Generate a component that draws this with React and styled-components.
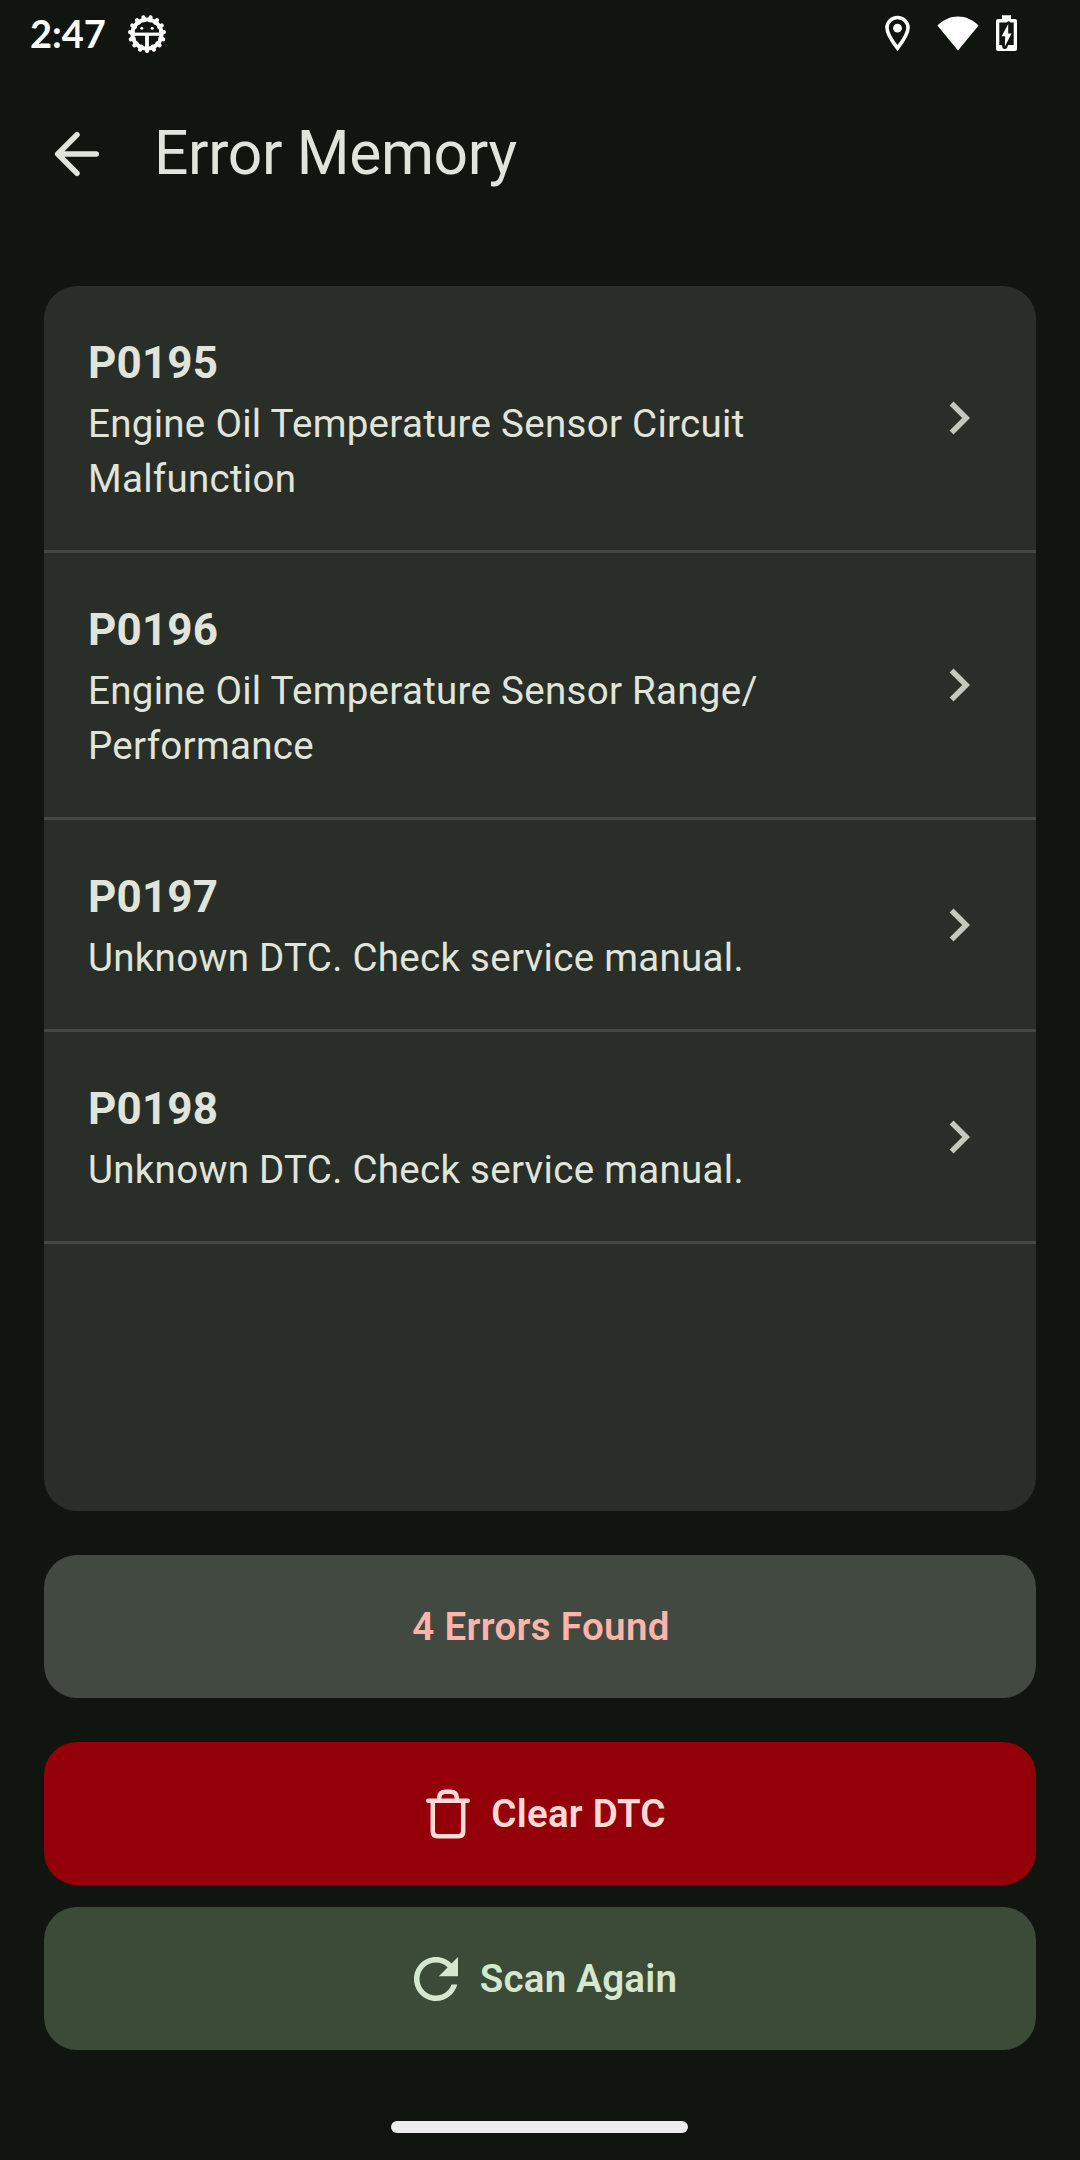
import React from "react";
import styled, { createGlobalStyle } from "styled-components";

const GlobalStyle = createGlobalStyle`
  * { box-sizing: border-box; }
  html, body { margin: 0; padding: 0; background: #10150f; }
  body { font-family: Roboto, "Noto Sans", sans-serif; color: #e0e4db; }
`;

const Screen = styled.div`
  width: 1080px;
  height: 2160px;
  display: flex;
  flex-direction: column;
  overflow: hidden;
  background: #10150f;
`;

const StatusBar = styled.header`
  height: 66px;
  flex: none;
  display: flex;
  align-items: center;
  justify-content: space-between;
  padding: 0 63px 0 30px;
  color: #fff;
`;

const StatusGroup = styled.div`
  display: flex;
  align-items: center;
  gap: ${(p) => p.$gap}px;
`;

const Clock = styled.span`
  font-family: Lato, sans-serif;
  font-weight: 700;
  font-size: 38px;
  line-height: 44px;
  white-space: nowrap;
`;

const Icon = styled.svg`
  display: block;
  flex: none;
  width: ${(p) => p.$w || 66}px;
  height: ${(p) => p.$h || p.$w || 66}px;
`;

const AppBar = styled.div`
  height: 176px;
  flex: none;
  display: flex;
  align-items: center;
  padding-left: 11px;
  gap: 11px;
`;

const IconButton = styled.button`
  width: 132px;
  height: 132px;
  padding: 0;
  border: 0;
  background: none;
  color: inherit;
  display: flex;
  align-items: center;
  justify-content: center;
`;

const Title = styled.h1`
  margin: 0;
  padding-bottom: 2px;
  font-size: 60.5px;
  line-height: 77px;
  font-weight: 400;
  letter-spacing: -0.35px;
`;

const Content = styled.main`
  flex: 1;
  min-height: 0;
  display: flex;
  flex-direction: column;
  gap: 44px;
  padding: 44px 44px 0;
`;

const ErrorList = styled.ul`
  height: 1225px;
  flex: none;
  margin: 0;
  padding: 0;
  list-style: none;
  border-radius: 33px;
  overflow: hidden;
  background: #292e28;
`;

const ErrorRow = styled.li`
  display: flex;
  align-items: center;
  justify-content: space-between;
  padding: 44px;
  border-bottom: 3px solid #424940;
`;

const Details = styled.div`
  width: 720px;
`;

const Code = styled.div`
  font-size: 44px;
  line-height: 66px;
  font-weight: 700;
  letter-spacing: 0.15px;
`;

const Description = styled.div`
  font-size: 38.5px;
  line-height: 55px;
  letter-spacing: 0.29px;
`;

const Summary = styled.div`
  height: 143px;
  flex: none;
  display: flex;
  align-items: center;
  justify-content: center;
  padding-left: 2px;
  border-radius: 33px;
  background: #424940;
  color: #ffb4ab;
  font-size: 38.5px;
  font-weight: 600;
  letter-spacing: 0.36px;
`;

const Actions = styled.div`
  display: flex;
  flex-direction: column;
  gap: 22px;
`;

const ActionButton = styled.button`
  height: 143px;
  padding: 0;
  border: 0;
  border-radius: 33px;
  display: flex;
  align-items: center;
  justify-content: center;
  gap: 11px;
  font-family: inherit;
  font-size: 38.5px;
  font-weight: 600;
  letter-spacing: 0.22px;
  background: ${(p) => p.$bg};
  color: ${(p) => p.$fg};
`;

const NavigationArea = styled.footer`
  height: 66px;
  flex: none;
  display: flex;
  justify-content: center;
  padding: 27px 1px 0 0;
`;

const HomeIndicator = styled.div`
  width: 297px;
  height: 12px;
  border-radius: 6px;
  background: #ececec;
`;

const TEETH = Array.from({ length: 15 }, (_, i) => i * 24 + 12);

const GearIcon = () => (
  <Icon $w={40} viewBox="-20 -21 40 40" fill="none" stroke="currentColor">
    <circle r="14.6" strokeWidth="4" />
    {TEETH.map((angle) => (
      <path key={angle} d="M0 -14V-17" strokeWidth="4.2" strokeLinecap="round" transform={`rotate(${angle})`} />
    ))}
    <path d="M-14 .2H14" strokeWidth="3.2" />
    <path d="M0 0V14" strokeWidth="3.8" />
    <circle cx="-5.2" cy="-5.7" r="1.5" fill="currentColor" stroke="none" />
    <circle cx="5.2" cy="-5.7" r="1.5" fill="currentColor" stroke="none" />
  </Icon>
);

const PinIcon = () => (
  <Icon $w={25} $h={36} viewBox="0 -.5 25 36">
    <path
      d="M12.5 2C6.6 2 2 6.6 2 12.5c0 6.200 5.200 13.300 10.500 20.200C17.800 25.800 23 18.700 23 12.500 23 6.600 18.400 2 12.500 2z"
      fill="none"
      stroke="currentColor"
      strokeWidth="3.600"
    />
    <circle cx="12.500" cy="12.700" r="4.400" fill="currentColor" />
  </Icon>
);

const WifiIcon = () => (
  <Icon $w={42} $h={35} viewBox="0 0 42 35">
    <path d="M21 34.500L.4 9.600C6.200 4 13.200 .6 21 .6s14.800 3.400 20.600 9z" fill="currentColor" />
  </Icon>
);

const BatteryIcon = () => (
  <Icon $w={21} $h={36} viewBox="0 0 21 36">
    <path
      fillRule="evenodd"
      d="M6 .3h9V4h4q2 0 2 2v28q0 2-2 2H2q-2 0-2-2V6q0-2 2-2h4zM3.300 7.500v22.500h2.400l1 3.300q2 1.200 4.200 0l1.200-3.300h5.600V7.500h-3.200l-1.600-1.400-2.600 1.400z"
      fill="currentColor"
    />
    <path d="M12.200 9L5.600 21.200h3.600L8.800 31.500 15.600 18.500h-3.400z" fill="currentColor" />
  </Icon>
);

const BackIcon = () => (
  <Icon viewBox="0 0 24 24" fill="none" stroke="currentColor" strokeWidth="2" strokeLinecap="round" strokeLinejoin="round">
    <path d="M19 12H5M12 5l-7 7 7 7" />
  </Icon>
);

const ChevronIcon = () => (
  <Icon viewBox="0 0 24 24">
    <path d="M10 6L8.590 7.410 13.170 12l-4.580 4.590L10 18l6-6z" fill="#c2c9bd" />
  </Icon>
);

const TrashIcon = () => (
  <Icon viewBox="-1 0 66 66" fill="none" stroke="currentColor" strokeWidth="4.500" strokeLinecap="round" strokeLinejoin="round">
    <path d="M13.200 19.700H52.800M17.800 19.700V50.500Q17.800 55.200 22.500 55.200H43.500Q48.200 55.200 48.200 50.500V19.700M24.200 19.500V17Q24.200 10.700 30.500 10.700H35.500Q41.800 10.700 41.800 17V19.500" />
  </Icon>
);

const RefreshIcon = () => (
  <Icon viewBox="0 0 24 24">
    <path
      d="M17.650 6.350C16.200 4.900 14.210 4 12 4c-4.420 0-7.990 3.580-7.990 8s3.570 8 7.990 8c3.730 0 6.840-2.550 7.730-6h-2.080c-.82 2.330-3.040 4-5.650 4-3.310 0-6-2.690-6-6s2.690-6 6-6c1.660 0 3.140.69 4.220 1.780L13 11h7V4l-2.350 2.350z"
      fill="currentColor"
    />
  </Icon>
);

const ERRORS = [
  { code: "P0195", text: "Engine Oil Temperature Sensor Circuit Malfunction" },
  { code: "P0196", text: "Engine Oil Temperature Sensor Range/\u200bPerformance" },
  { code: "P0197", text: "Unknown DTC. Check service manual." },
  { code: "P0198", text: "Unknown DTC. Check service manual." },
];

export default function App() {
  return (
    <Screen>
      <GlobalStyle />
      <StatusBar>
        <StatusGroup $gap={21}>
          <Clock>2:47</Clock>
          <GearIcon />
        </StatusGroup>
        <StatusGroup $gap={27}>
          <PinIcon />
          <StatusGroup $gap={17}>
            <WifiIcon />
            <BatteryIcon />
          </StatusGroup>
        </StatusGroup>
      </StatusBar>
      <AppBar>
        <IconButton aria-label="Back">
          <BackIcon />
        </IconButton>
        <Title>Error Memory</Title>
      </AppBar>
      <Content>
        <ErrorList>
          {ERRORS.map((error) => (
            <ErrorRow key={error.code}>
              <Details>
                <Code>{error.code}</Code>
                <Description>{error.text}</Description>
              </Details>
              <ChevronIcon />
            </ErrorRow>
          ))}
        </ErrorList>
        <Summary>4 Errors Found</Summary>
        <Actions>
          <ActionButton $bg="#93000a" $fg="#ffdad6">
            <TrashIcon />
            Clear DTC
          </ActionButton>
          <ActionButton $bg="#3b4b38" $fg="#d5e8cf">
            <RefreshIcon />
            Scan Again
          </ActionButton>
        </Actions>
      </Content>
      <NavigationArea>
        <HomeIndicator />
      </NavigationArea>
    </Screen>
  );
}
